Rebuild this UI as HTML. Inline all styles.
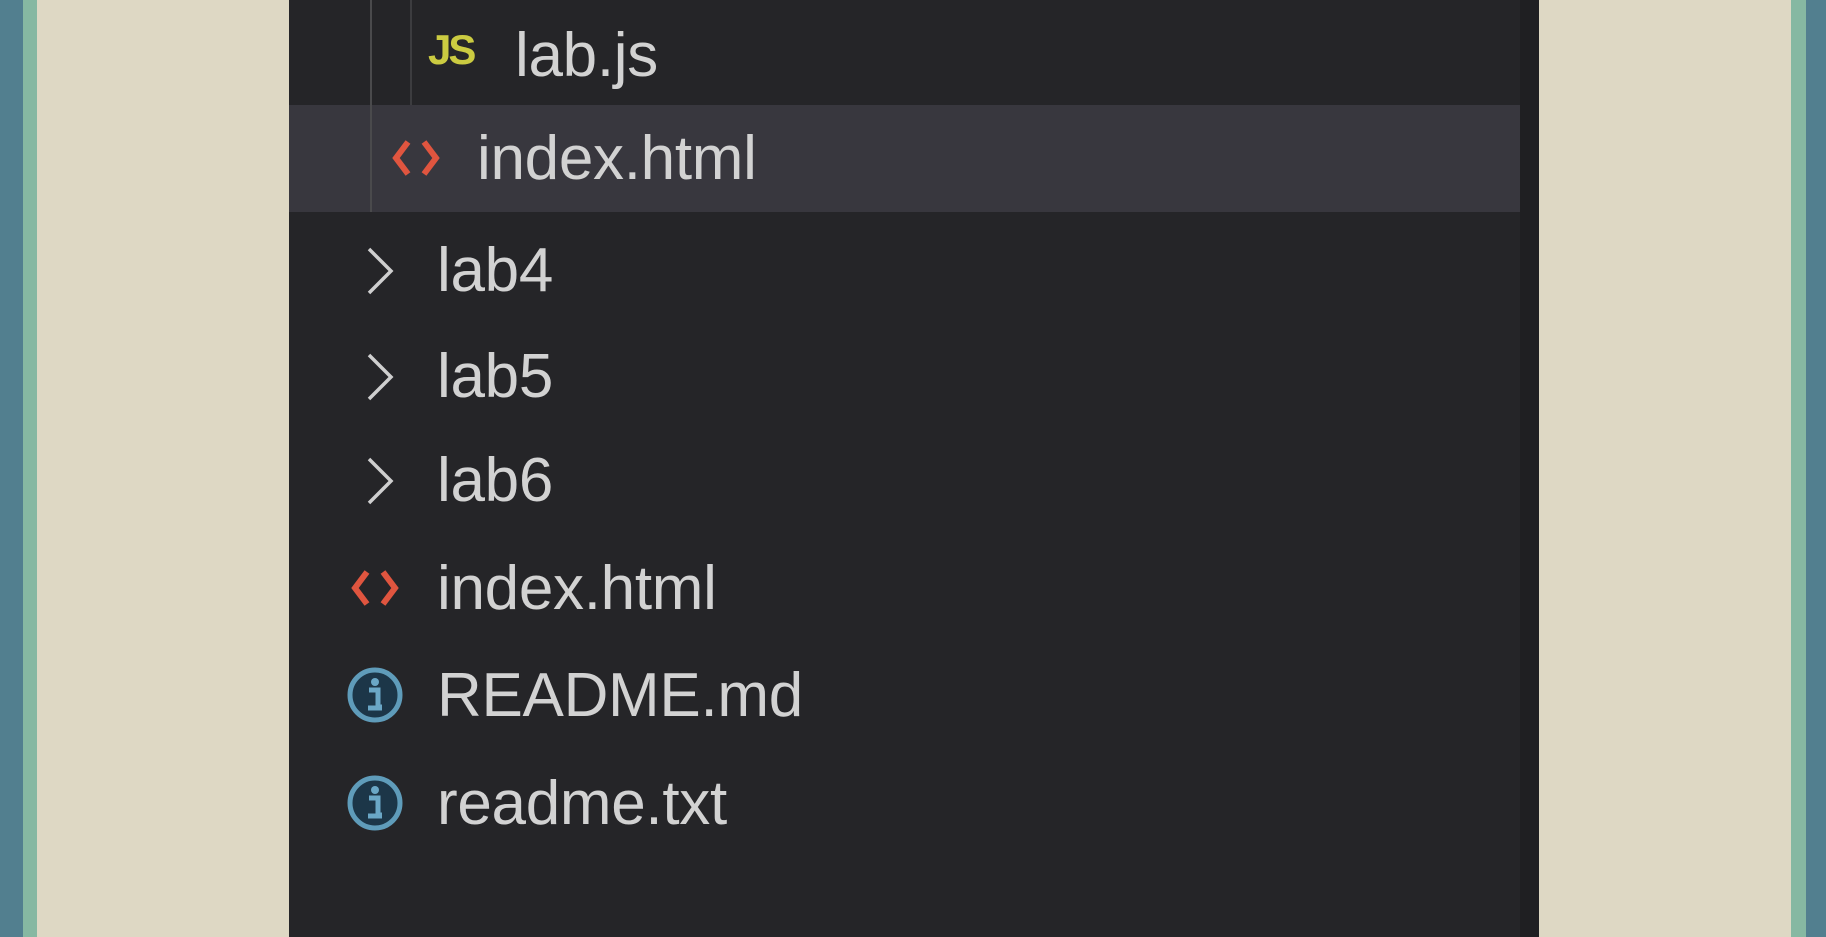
<!DOCTYPE html>
<html><head><meta charset="utf-8"><style>
html,body{margin:0;padding:0;width:1826px;height:937px;overflow:hidden;background:#252528;position:relative;font-family:"Liberation Sans",sans-serif}
.a{position:absolute}
.t{position:absolute;color:#d2d2d2;font-size:62px;line-height:107px;height:107px;white-space:nowrap;letter-spacing:-0.3px}
</style></head><body>
<div class="a" style="left:0;top:0;width:23px;height:937px;background:#527f8f"></div>
<div class="a" style="left:23px;top:0;width:14px;height:937px;background:#86b8a2"></div>
<div class="a" style="left:37px;top:0;width:252px;height:937px;background:#ded8c4"></div>
<div class="a" style="left:1539px;top:0;width:252px;height:937px;background:#ded8c4"></div>
<div class="a" style="left:1791px;top:0;width:15px;height:937px;background:#86b8a2"></div>
<div class="a" style="left:1806px;top:0;width:20px;height:937px;background:#527f8f"></div>
<div class="a" style="left:289px;top:0;width:1250px;height:937px;background:#252528"></div>
<div class="a" style="left:1520px;top:0;width:19px;height:937px;background:#1f1f22"></div>
<div class="a" style="left:289px;top:105px;width:1231px;height:107px;background:#38373e"></div>
<div class="a" style="left:370px;top:0;width:2px;height:212px;background:#4a4a4c"></div>
<div class="a" style="left:410px;top:0;width:2px;height:105px;background:#3c3c3f"></div>

<div class="a" style="left:428px;top:26px;color:#cbcb41;font-weight:bold;font-size:42px;letter-spacing:-3px">JS</div>
<div class="t" style="left:515px;top:2px">lab.js</div>

<svg class="a" style="left:390px;top:136px" width="52" height="44" viewBox="0 0 52 44"><path d="M18 6 L6 22 L18 38 M34 6 L46 22 L34 38" stroke="#e0553f" stroke-width="6" fill="none"/></svg>
<div class="t" style="left:477px;top:105px">index.html</div>

<svg class="a" style="left:363px;top:246px" width="34" height="50" viewBox="0 0 34 50"><path d="M6 3 L28 25 L6 47" stroke="#cfcfcf" stroke-width="3.5" fill="none"/></svg>
<div class="t" style="left:437px;top:217px">lab4</div>
<svg class="a" style="left:363px;top:352px" width="34" height="50" viewBox="0 0 34 50"><path d="M6 3 L28 25 L6 47" stroke="#cfcfcf" stroke-width="3.5" fill="none"/></svg>
<div class="t" style="left:437px;top:323px">lab5</div>
<svg class="a" style="left:363px;top:456px" width="34" height="50" viewBox="0 0 34 50"><path d="M6 3 L28 25 L6 47" stroke="#cfcfcf" stroke-width="3.5" fill="none"/></svg>
<div class="t" style="left:437px;top:427px">lab6</div>

<svg class="a" style="left:349px;top:566px" width="52" height="44" viewBox="0 0 52 44"><path d="M18 6 L6 22 L18 38 M34 6 L46 22 L34 38" stroke="#e0553f" stroke-width="6" fill="none"/></svg>
<div class="t" style="left:437px;top:535px">index.html</div>

<svg class="a" style="left:345px;top:665px" width="60" height="60" viewBox="0 0 60 60"><circle cx="30" cy="30" r="25" stroke="#5f9cba" stroke-width="5" fill="#1c3648"/><circle cx="30" cy="17" r="4" fill="#6aa7c6"/><path d="M24 25 H33 V42 H37 M23 43 H37" stroke="#6aa7c6" stroke-width="5" fill="none"/></svg>
<div class="t" style="left:437px;top:642px">README.md</div>
<svg class="a" style="left:345px;top:773px" width="60" height="60" viewBox="0 0 60 60"><circle cx="30" cy="30" r="25" stroke="#5f9cba" stroke-width="5" fill="#1c3648"/><circle cx="30" cy="17" r="4" fill="#6aa7c6"/><path d="M24 25 H33 V42 H37 M23 43 H37" stroke="#6aa7c6" stroke-width="5" fill="none"/></svg>
<div class="t" style="left:437px;top:750px">readme.txt</div>
</body></html>
